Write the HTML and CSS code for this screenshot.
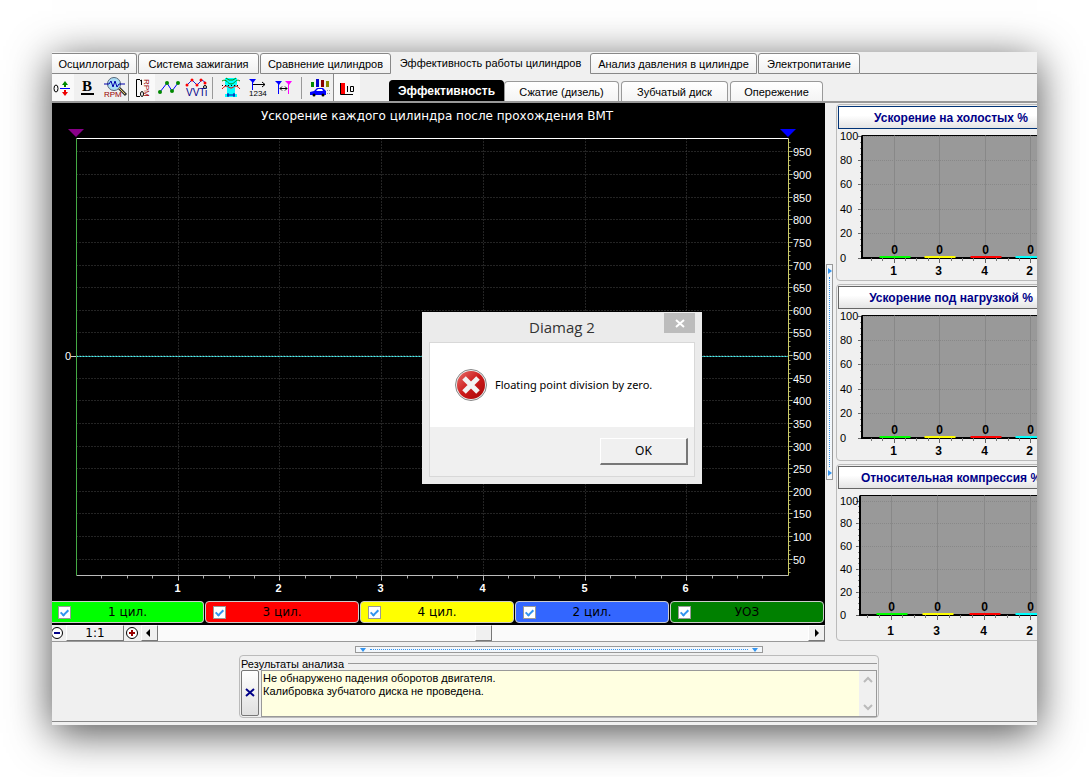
FILE: index.html
```html
<!DOCTYPE html>
<html lang="ru">
<head>
<meta charset="utf-8">
<title>Diamag 2</title>
<link rel="stylesheet" href="styles.css">
</head>
<body>
<main class="app">
  <nav class="tabs" aria-label="Разделы">
    <button class="tab tab-first">Осциллограф</button>
    <button class="tab tab-ignition">Система зажигания</button>
    <button class="tab tab-compare">Сравнение цилиндров</button>
    <button class="tab tab-active">Эффективность работы цилиндров</button>
    <button class="tab tab-pressure">Анализ давления в цилиндре</button>
    <button class="tab tab-power">Электропитание</button>
    <span class="tabs-rest"></span>
  </nav>

  <div class="toolbar">
    <div class="tools">
      <button class="tool tool-narrow tool-on" aria-label="Смещение нуля"><svg width="22" height="24" viewBox="0 0 22 24"><ellipse cx="4" cy="12.5" rx="2" ry="3.5" fill="none" stroke="#000"/><path d="M8 12.500h10" stroke="#00f"/><path d="M13 8v3" stroke="#080" stroke-width="2"/><path d="M13 5l3 4h-6z" fill="#080"/><path d="M13 14v3" stroke="#e00" stroke-width="2"/><path d="M10 16h6l-3 4z" fill="#e00"/></svg></button>
      <button class="tool" aria-label="Жирные линии"><svg width="27" height="24" viewBox="0 0 27 24"><text x="8" y="15" class="ico-b">B</text><path d="M7 18h13" stroke="#000" stroke-width="2"/></svg></button>
      <button class="tool" aria-label="Поиск RPM"><svg width="27" height="24" viewBox="0 0 27 24"><path d="M18 12l7 7" stroke="#333" stroke-width="3"/><path d="M18 12l6 6" stroke="#e8c860"/><circle cx="13" cy="8" r="6.500" fill="#a9dcf6" stroke="#567"/><path d="M3 8h5l2-3 2 6 2-6 2 6 2-3h6" fill="none" stroke="#00a"/><text x="3" y="21" class="ico-rpm">RPM</text></svg></button>
      <button class="tool tool-on tool-edge" aria-label="Шкала RPM"><svg width="26" height="24" viewBox="0 0 26 24"><path d="M11 3.500H7.500v17H11" fill="none" stroke="#000"/><path d="M11 5l1.500-1v5" fill="none" stroke="#000"/><ellipse cx="13" cy="18" rx="1.500" ry="2.500" fill="none" stroke="#000"/><text transform="translate(15 3) rotate(90)" class="ico-rpm">RPM</text></svg></button>
      <button class="tool" aria-label="Точки"><svg width="27" height="24" viewBox="0 0 27 24"><path d="M5 16l7-9 5 8 6-8" fill="none" stroke="#00f"/><g fill="#080"><circle cx="5" cy="16" r="2"/><circle cx="12" cy="7" r="2"/><circle cx="17" cy="15" r="2"/><circle cx="23" cy="7" r="2"/></g></svg></button>
      <button class="tool" aria-label="VVTi"><svg width="27" height="24" viewBox="0 0 27 24"><path d="M5 9l5-5 5 5 5-5 4 3" fill="none" stroke="#22c"/><g fill="#f00"><circle cx="5" cy="9" r="1.500"/><circle cx="10" cy="4" r="1.500"/><circle cx="15" cy="9" r="1.500"/><circle cx="19" cy="4" r="1.500"/><circle cx="23" cy="7" r="1.500"/></g><circle cx="23" cy="11" r="1.500" fill="none" stroke="#000"/><text x="4" y="20" class="ico-vvti">VVTi</text></svg></button>
      <span class="tool-sep"></span>
      <button class="tool" aria-label="Цилиндр"><svg width="27" height="24" viewBox="0 0 27 24"><path d="M8 2h12v6l-2 4v6h2v3H8v-3h2v-6L8 8z" fill="#0ff"/><path d="M5 5c5-3 5 3 9 3s5-6 9-3M9 2l3 2h4l3-2" fill="none" stroke="#080"/><path d="M5 13c5-6 6-1 9-1s4-5 9 1" fill="none" stroke="#e00"/><path d="M5 9.500h18" stroke="#000" stroke-dasharray="1 2"/><path d="M10 19h8M11 17v4M17 17v4" stroke="#00a"/></svg></button>
      <button class="tool" aria-label="Порядок цилиндров"><svg width="27" height="24" viewBox="0 0 27 24"><path d="M5 3h7l-3 4z" fill="#00f"/><path d="M8.500 5v9" stroke="#00f"/><path d="M9 8.500h12M18 6l3 2.500-3 2.500" fill="none" stroke="#000"/><text x="5" y="20" class="ico-num">1234</text></svg></button>
      <button class="tool" aria-label="Интервал"><svg width="27" height="24" viewBox="0 0 27 24"><path d="M4 5h7l-3 4z" fill="#00f"/><path d="M7.500 7v11" stroke="#00f"/><path d="M14 5h7l-3 4z" fill="#f0f"/><path d="M17.500 7v11" stroke="#f0f"/><path d="M9 12.500h7M11 10.500l-2 2 2 2M14 10.500l2 2-2 2" fill="none" stroke="#000"/></svg></button>
      <span class="tool-sep"></span>
      <button class="tool" aria-label="Динамика"><svg width="27" height="24" viewBox="0 0 27 24"><path d="M5 6h3v5H5z" fill="#080"/><path d="M10 3h3v8h-3z" fill="#00c"/><path d="M15 4h3v7h-3z" fill="#800"/><path d="M20 5h3v6h-3z" fill="#880"/><path d="M4 16l4-1 3-3h6l3 3v4H4z" fill="#00f"/><path d="M10 15l2-2h4l1 2z" fill="#fff"/><circle cx="8" cy="19" r="1.500"/><circle cx="17" cy="19" r="1.500"/><path d="M21 14.500h4M21 17.500h4" stroke="#999" stroke-dasharray="1 1"/></svg></button>
      <button class="tool tool-on tool-edge" aria-label="Гистограмма"><svg width="26" height="24" viewBox="0 0 26 24"><path d="M7 7h4v11H7z" fill="#f00"/><path d="M6.500 7v11.500H19" fill="none" stroke="#000"/><path d="M13.500 10v6M16.500 10.500h3v5h-3z" fill="none" stroke="#000"/></svg></button>
    </div>
    <div class="subtabs">
      <button class="subtab subtab-active">Эффективность</button>
      <button class="subtab">Сжатие (дизель)</button>
      <button class="subtab subtab-disk">Зубчатый диск</button>
      <button class="subtab subtab-advance">Опережение</button>
    </div>
  </div>

  <div class="work">
    <section class="scope">
      <svg class="scope-chart" id="scope" viewBox="52 103 773 497" role="img" aria-label="Ускорение каждого цилиндра"></svg>
      <div class="legend">
        <label class="cyl cyl-1"><input type="checkbox" checked><span>1 цил.</span></label>
        <label class="cyl cyl-3"><input type="checkbox" checked><span>3 цил.</span></label>
        <label class="cyl cyl-4"><input type="checkbox" checked><span>4 цил.</span></label>
        <label class="cyl cyl-2"><input type="checkbox" checked><span>2 цил.</span></label>
        <label class="cyl cyl-uoz"><input type="checkbox" checked><span>УОЗ</span></label>
      </div>
      <div class="zoombar">
        <button class="zoom-btn zoom-out" aria-label="Уменьшить"><svg width="14" height="16" viewBox="0 0 14 16"><circle cx="5" cy="8" r="5.500" fill="#fff" stroke="#000"/><path d="M2 8h6" stroke="#008" stroke-width="2"/></svg></button>
        <button class="ratio">1:1</button>
        <button class="zoom-btn" aria-label="Увеличить"><svg width="16" height="16" viewBox="0 0 16 16"><circle cx="8" cy="8" r="5.500" fill="#fff" stroke="#000"/><path d="M5 8h6M8 5v6" stroke="#900" stroke-width="2"/></svg></button>
        <button class="arrow" aria-label="Влево"><svg width="14" height="14" viewBox="0 0 14 14"><path d="M8 3v8L4 7z"/></svg></button>
        <span class="track"><button class="thumb" aria-label="Положение"></button></span>
        <button class="arrow" aria-label="Вправо"><svg width="14" height="14" viewBox="0 0 14 14"><path d="M6 3v8l4-4z"/></svg></button>
      </div>
    </section>
    <div class="vsplit"><button class="vgrip" aria-label="Свернуть панель"><i class="tri-right"></i><i class="vdots"></i><i class="tri-right"></i></button></div>
    <aside class="side">
      <section class="gauge"><button class="gauge-title gauge-focus">Ускорение на холостых %</button><svg class="gauge-chart" width="226" height="151" data-kind="accel"></svg></section>
      <section class="gauge"><button class="gauge-title">Ускорение под нагрузкой %</button><svg class="gauge-chart" width="226" height="151" data-kind="accel"></svg></section>
      <section class="gauge"><button class="gauge-title">Относительная компрессия %</button><svg class="gauge-chart" width="226" height="151" data-kind="compression"></svg></section>
    </aside>
  </div>

  <footer class="bottom">
    <button class="hgrip" aria-label="Свернуть результаты"><i class="tri-down"></i><i class="hdots"></i><i class="tri-down"></i></button>
    <section class="results">
      <label class="results-title" for="log">Результаты анализа</label>
      <div class="results-body">
        <button class="clear" aria-label="Очистить"><svg width="10" height="10" viewBox="0 0 10 10"><path d="M1 1l8 7M9 1L1 8" stroke="#008" stroke-width="2"/></svg></button>
        <div class="log-box">
          <textarea id="log" class="log" readonly>Не обнаружено падения оборотов двигателя.
Калибровка зубчатого диска не проведена.</textarea>
          <span class="log-scroll"><svg width="10" height="8" viewBox="0 0 10 8"><path d="M1 6l4-4 4 4" fill="none" stroke="#bbb" stroke-width="2"/></svg><svg width="10" height="8" viewBox="0 0 10 8"><path d="M1 2l4 4 4-4" fill="none" stroke="#bbb" stroke-width="2"/></svg></span>
        </div>
      </div>
    </section>
  </footer>

  <div class="dialog" role="alertdialog" aria-labelledby="dlg-title" aria-describedby="dlg-text">
    <header class="dialog-head"><h1 id="dlg-title">Diamag 2</h1><button class="dialog-close" aria-label="Закрыть"><svg width="10" height="10" viewBox="0 0 10 10"><path d="M1 2l8 7M9 2L1 9" stroke="#fff" stroke-width="2"/></svg></button></header>
    <div class="dialog-body">
      <div class="dialog-message">
        <svg width="34" height="34" viewBox="0 0 34 34"><defs><linearGradient id="red" x1="0" y1="0" x2="1" y2="1"><stop offset="0" stop-color="#e8706c"/><stop offset=".5" stop-color="#cc1a1a"/><stop offset="1" stop-color="#a80808"/></linearGradient></defs><circle cx="17" cy="17" r="15.500" fill="#eee" stroke="#888"/><circle cx="17" cy="17" r="14" fill="url(#red)"/><path d="M10 10l14 14M24 10L10 24" stroke="#f2f2f2" stroke-width="5"/></svg>
        <p id="dlg-text">Floating point division by zero.</p>
      </div>
      <div class="dialog-actions"><button class="ok">OK</button></div>
    </div>
  </div>
</main>
<script src="charts.js"></script>
</body>
</html>
```
FILE: styles.css
```css
* { box-sizing: border-box; }
body {
  margin: 0;
  padding: 52px;
  background: #fff;
  color: #000;
  font: 11px/14px "Liberation Sans", Arial, sans-serif;
}
button { font: inherit; color: inherit; margin: 0; padding: 0; border: 0; background: none; }
svg { display: block; }
.app {
  position: relative;
  background: #f0f0f0;
  box-shadow: 0 8px 40px rgba(0, 0, 0, .7);
}

/* top tabs */
.tabs { display: flex; height: 22px; }
.tab {
  flex: none;
  margin-top: 1px;
  margin-right: 1px;
  border: 1px solid #888;
  border-radius: 3px 3px 0 0;
  background: linear-gradient(#fff, #f0f0f0);
  white-space: nowrap;
}
.tab-first { width: 85px; border-left: 0; border-top-left-radius: 0; }
.tab-ignition { width: 121px; }
.tab-compare { width: 131px; margin-right: 0; }
.tab-active { width: 199px; margin: 0; border: 0; background: none; }
.tab-pressure { width: 167px; }
.tab-power { width: 102px; margin-right: 0; }
.tabs-rest { flex: 1; border-bottom: 1px solid #888; }

/* toolbar */
.toolbar {
  display: flex;
  height: 29px;
  border-bottom: 2px solid #999;
}
.tools { display: flex; flex: none; width: 337px; align-items: center; }
.tool { width: 27px; height: 27px; flex: none; display: flex; align-items: center; }
.tool svg { flex: none; }
.tool-narrow { width: 22px; }
.tool-on { background: #f9f9f9; }
.tool-edge { border-left: 1px solid #888; }
.tool-sep { flex: none; width: 1px; height: 22px; margin: 0 4px 0 3px; background: #999; }
.ico-b { font: bold 15px "Liberation Serif", serif; }
.ico-rpm { font: 8px "Liberation Sans", sans-serif; fill: #900; }
.ico-vvti { font: 10px "Liberation Sans", sans-serif; fill: #008; }
.ico-num { font: 8px "Liberation Sans", sans-serif; }
.subtabs { display: flex; align-items: flex-end; }
.subtab {
  width: 115px;
  height: 20px;
  margin-right: 2px;
  border: 1px solid #999;
  border-bottom: 0;
  border-radius: 4px 4px 0 0;
  background: linear-gradient(#fff, #f4f4f4);
}
.subtab-active {
  height: 21px;
  margin-right: 0;
  border-color: #000;
  background: #000;
  color: #fff;
  font-weight: bold;
  font-size: 12px;
}
.subtab-disk { width: 107px; }
.subtab-advance { width: 93px; margin-right: 0; }

/* chart area */
.work { display: flex; }
.scope { flex: 1; min-width: 0; background: #000; }
.scope-chart { width: 100%; height: auto; }
.scope-title { font: 12px "DejaVu Sans", Verdana, sans-serif; fill: #fff; text-anchor: middle; }
.scope-y { font: 11px "Liberation Sans", Arial, sans-serif; fill: #fff; }
.scope-x { font: bold 11px "Liberation Sans", Arial, sans-serif; fill: #fff; text-anchor: middle; }
.legend { display: grid; grid-template-columns: 152fr 154fr 154fr 154fr 154fr; gap: 1px; padding: 1px 1px 2px 0; }
.cyl {
  display: grid;
  grid-template-columns: 26px 1fr 26px;
  align-items: center;
  height: 22px;
  border: 1px solid #ccc;
  border-radius: 4px;
  font: 12px/16px "DejaVu Sans", Verdana, sans-serif;
  text-align: center;
}
.cyl-1 { background: #0f0; border-left: 0; border-radius: 0 4px 4px 0; }
.cyl-3 { background: #f00; }
.cyl-4 { background: #ff0; }
.cyl-2 { background: #36f; }
.cyl-uoz { background: #008000; }
.cyl input {
  appearance: none;
  display: grid;
  place-items: start center;
  width: 13px;
  height: 13px;
  margin: 0 0 0 7px;
  border: 1px solid #999;
  background: #fff;
}
.cyl-1 input { margin-left: 6px; }
.cyl input:checked::before {
  content: "";
  width: 3px;
  height: 6px;
  margin-top: 1px;
  border: solid #3294f0;
  border-width: 0 2px 2px 0;
  transform: rotate(45deg);
}

/* zoom and scroll bar */
.zoombar {
  display: flex;
  height: 17px;
  background: #f0f0f0;
  border-bottom: 1px solid #999;
}
.zoom-btn { width: 17px; }
.zoom-out { width: 14px; }
.ratio, .arrow, .thumb {
  border: 1px solid #fff;
  border-right-color: #777;
  border-bottom-color: #777;
  background: #f0f0f0;
}
.ratio { width: 58px; font: 12px/14px "DejaVu Sans", Verdana, sans-serif; }
.arrow { width: 17px; }
.track { flex: 1; display: flex; justify-content: center; background: #fafafa; }
.thumb { width: 17px; }

/* splitters */
.vsplit { width: 10px; display: flex; flex-direction: column; align-items: flex-start; padding: 161px 0 0 1px; }
.vgrip, .hgrip { display: flex; align-items: center; border: 1px solid #999; background: #f3f7fb; }
.vgrip { flex-direction: column; width: 7px; height: 216px; padding: 3px 0; gap: 3px; }
.vdots { flex: 1; border-left: 1px dotted #3294f0; }
.tri-right { border: solid transparent; border-width: 3px 0 3px 4px; border-left-color: #3294f0; }
.hgrip { width: 408px; height: 7px; margin-left: 303px; padding: 0 4px; gap: 4px; }
.hdots { flex: 1; border-top: 1px dotted #3294f0; }
.tri-down { border: solid transparent; border-width: 4px 3px 0; border-top-color: #3294f0; }

/* side gauges */
.side { width: 202px; flex: none; display: grid; gap: 3px; align-content: start; overflow: hidden; padding: 1px 0 0 1px; }
.gauge { width: 240px; height: 177px; padding: 1px; border: 1px solid #bbb; border-radius: 4px; }
.gauge-title {
  display: block;
  width: 226px;
  height: 23px;
  border: 1px solid #666;
  background: linear-gradient(#fff 40%, #e4e4e4);
  color: #008;
  font-weight: bold;
  font-size: 12px;
}
.gauge-focus { border-color: #037; }
.gauge-y { font: 11px "Liberation Sans", Arial, sans-serif; }
.gauge-x { font: bold 12px "Liberation Sans", Arial, sans-serif; text-anchor: middle; }

/* results */
.bottom { height: 83px; padding-top: 4px; border-bottom: 3px solid #f0f0f0; box-shadow: inset 0 -1px #888; }
.results { width: 640px; height: 63px; margin: 2px 0 0 187px; padding: 1px; border: 1px solid #bbb; border-radius: 4px; }
.results-title { display: flex; align-items: center; gap: 4px; height: 13px; }
.results-title::after { content: ""; flex: 1; height: 1px; background: #999; }
.results-body { display: flex; gap: 2px; }
.clear {
  width: 18px;
  height: 46px;
  display: grid;
  place-items: center;
  border: 1px solid #777;
  border-radius: 2px;
  background: linear-gradient(#fff, #e0e0e0);
}
.log-box { flex: 1; display: flex; height: 47px; border: 1px solid #999; background: #ffffe1; }
.log {
  flex: 1;
  height: 45px;
  padding: 1px;
  border: 0;
  resize: none;
  overflow: hidden;
  outline: 0;
  background: none;
  color: #000;
  font: 11px/13px "Liberation Sans", Arial, sans-serif;
}
.log-scroll { width: 17px; display: flex; flex-direction: column; align-items: center; justify-content: space-between; padding: 5px 0; background: #f0f0f0; }

/* error dialog */
.dialog { position: absolute; left: 370px; top: 260px; width: 280px; padding: 0 7px 7px; background: #ebebeb; }
.dialog-head { display: grid; grid-template-columns: 31px 1fr 31px; height: 30px; }
.dialog-head h1 { grid-column: 2; margin: 0; padding-top: 1px; font: 15px/28px "Open Sans", "Noto Sans", sans-serif; text-align: center; color: #333; }
.dialog-close { height: 20px; margin-top: 1px; display: grid; place-items: center; background: #bcbcbc; }
.dialog-body { border: 1px solid #d8d8d8; background: #f0f0f0; }
.dialog-message { display: flex; align-items: center; gap: 7px; height: 84px; padding-left: 24px; background: #fff; }
.dialog-message p { margin: 0; font: 11px/14px "Noto Sans", sans-serif; }
.dialog-actions { display: flex; justify-content: flex-end; padding: 11px 6px; }
.ok {
  width: 88px;
  height: 27px;
  border: 1px solid #fff;
  border-right: 2px solid #777;
  border-bottom: 2px solid #777;
  background: #f0f0f0;
  font: 12px/14px "Noto Sans", sans-serif;
}
```
FILE: charts.js
```js
const NS = "http://www.w3.org/2000/svg";

function add(svg, tag, attrs, text) {
  const el = document.createElementNS(NS, tag);
  for (const key in attrs) el.setAttribute(key, attrs[key]);
  if (text !== undefined) el.textContent = text;
  svg.appendChild(el);
}

function line(svg, x1, y1, x2, y2, stroke, extra) {
  add(svg, "line", Object.assign({ x1, y1, x2, y2, stroke }, extra));
}

const snap = (v) => Math.floor(v) + 0.5;

function drawScope(svg) {
  const left = 76.5, right = 788.5, top = 138.5, bottom = 575.5;
  const yOf = (v) => snap(581.8 - v * 0.4525);
  const xOf = (n) => snap(left + n * 101.7);
  const dots = { "stroke-dasharray": "1 2" };

  add(svg, "text", { class: "scope-title", x: 437, y: 120 }, "Ускорение каждого цилиндра после прохождения ВМТ");
  for (let n = 1; n < 7; n++) {
    line(svg, xOf(n), top, xOf(n), bottom, "#484848", dots);
    line(svg, xOf(n), bottom, xOf(n), bottom + 5, "#ccc");
    add(svg, "text", { class: "scope-x", x: xOf(n) - 1, y: 592 }, n);
  }
  for (let n = 0.25; n < 7; n += 0.25) line(svg, xOf(n), bottom, xOf(n), bottom + 3, "#aaa");
  for (let v = 50; v <= 950; v += 50) {
    line(svg, left, yOf(v), right, yOf(v), "#484848", dots);
    line(svg, right, yOf(v), right + 4, yOf(v), "#cc8");
    add(svg, "text", { class: "scope-y", x: 793, y: yOf(v) + 4 }, v);
  }
  for (let v = 20; v < 980; v += 10) line(svg, right, yOf(v), right + 2, yOf(v), "#996");
  line(svg, 71, 356.5, left, 356.5, "#ccc");
  add(svg, "text", { class: "scope-y", x: 65, y: 360 }, "0");
  line(svg, left, 356.5, right, 356.5, "#155");
  line(svg, left, 356.5, right, 356.5, "#5ee", { "stroke-dasharray": "2 1" });
  line(svg, left, top, right, top, "#fff");
  line(svg, left, bottom, right, bottom, "#bbb");
  line(svg, left, top, left, bottom, "#4a4");
  line(svg, right, top, right, bottom, "#cc6");
  add(svg, "path", { d: "M68 129h16l-8 8z", fill: "#808" });
  add(svg, "path", { d: "M780 129h16l-8 8z", fill: "#00f" });
}

function drawGauge(svg) {
  const tall = svg.dataset.kind === "accel";
  const left = tall ? 24 : 22, top = 6.5, bottom = tall ? 129 : 126;
  const unit = tall ? 1.22 : 1.14;
  const first = tall ? 56 : 53, step = tall ? 45.6 : 46.6;
  const colours = ["#0f0", "#ff0", "#f00", "#0ff"];

  add(svg, "rect", { x: left, y: top, width: 202, height: bottom - top, fill: "#999" });
  for (let v = 0; v <= 100; v += 20) {
    const y = snap(bottom - v * unit);
    line(svg, left, y, 226, y, "#888", { "stroke-dasharray": "1 1" });
    line(svg, left - 4, y, left, y, "#666");
    add(svg, "text", { class: "gauge-y", x: 2, y: y + 3 }, v);
  }
  for (let v = 5; v < 100; v += 5) line(svg, left - 2, snap(bottom - v * unit), left, snap(bottom - v * unit), "#888");
  line(svg, left, top, 226, top, "#000");
  line(svg, left, top, left, bottom, "#000", { "stroke-width": 2 });
  line(svg, left - 1, bottom, 226, bottom, "#000", { "stroke-width": 2 });
  for (let x = first - step / 2; x < 220; x += step / 4) line(svg, snap(x), bottom, snap(x), bottom + 3, "#777");
  [1, 3, 4, 2].forEach((name, i) => {
    const x = snap(first + i * step);
    line(svg, x, top, x, bottom - 1, "#888");
    line(svg, x, bottom, x, bottom + 5, "#666");
    line(svg, x - 15, bottom - 1, x + 16, bottom - 1, colours[i], { "stroke-width": 2 });
    add(svg, "text", { class: "gauge-x", x, y: bottom - 4 }, "0");
    add(svg, "text", { class: "gauge-x", x: x - 1, y: 146 }, name);
  });
}

drawScope(document.getElementById("scope"));
document.querySelectorAll(".gauge-chart").forEach(drawGauge);
```
